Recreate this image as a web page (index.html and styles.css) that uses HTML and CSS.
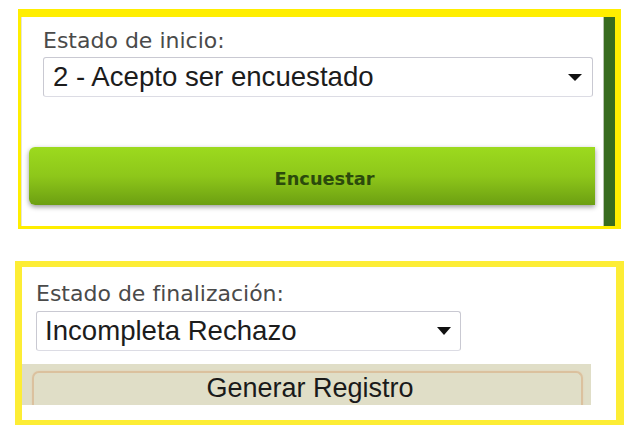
FILE: index.html
```html
<!DOCTYPE html>
<html lang="es">
<head>
<meta charset="utf-8">
<title>Estado</title>
<link rel="stylesheet" href="styles.css">
</head>
<body>
  <section class="panel panel-start">
    <div class="panel-body">
      <label class="field-label">Estado de inicio:</label>
      <div class="select select-start">
        <span class="select-text">2 - Acepto ser encuestado</span>
        <svg class="select-arrow" width="14" height="7" viewBox="0 0 14 7"><path d="M0 0H14L7 7Z" fill="#111"/></svg>
      </div>
      <button class="btn-green" type="button">Encuestar</button>
    </div>
    <div class="side-stripe"></div>
  </section>

  <section class="panel panel-end">
    <label class="field-label">Estado de finalización:</label>
    <div class="select select-end">
      <span class="select-text">Incompleta Rechazo</span>
      <svg class="select-arrow" width="14" height="8" viewBox="0 0 14 8"><path d="M0 0H14L7 8Z" fill="#111"/></svg>
    </div>
    <div class="beige-bar">
      <button class="btn-beige" type="button">Generar Registro</button>
    </div>
  </section>
</body>
</html>
```

FILE: styles.css
```css
html, body {
  margin: 0;
  padding: 0;
  background: #ffffff;
}

body {
  padding-top: 9px;
}

.panel {
  box-sizing: border-box;
  background: #ffffff;
}

.panel-start {
  margin-left: 18px;
  width: 603px;
  height: 220px;
  border-style: solid;
  border-color: #ffee00;
  border-width: 8px 6px 3px 4px;
  display: flex;
}

.panel-body {
  flex: 1;
  display: flex;
  flex-direction: column;
  padding: 11px 8px 0 7px;
  border-left: 1px solid #e4e4d8;
  margin-left: -1px;
}

.side-stripe {
  width: 11px;
  background: #386c1f;
  border-left: 1px solid #b8c4b0;
}

.field-label {
  display: block;
  font-family: "DejaVu Sans", Verdana, sans-serif;
  font-size: 22px;
  line-height: 26px;
  color: #4a4a4a;
}

.panel-start .field-label {
  margin-left: 14px;
}

.select {
  box-sizing: border-box;
  height: 40px;
  border: 1px solid #c9c9d2;
  border-bottom-color: #dcdce4;
  border-radius: 3px;
  background: #ffffff;
  display: flex;
  align-items: center;
  justify-content: space-between;
  font-family: "Liberation Sans", Arial, sans-serif;
  font-size: 27.6px;
  color: #1c1c1c;
}

.select-text {
  line-height: 38px;
  white-space: nowrap;
}

.select-start {
  margin: 3px 2px 0 14px;
  padding: 0 10px 0 9px;
}

.select-end {
  width: 425px;
  margin-top: 4px;
  padding: 0 9px 0 8px;
}

.btn-green {
  margin-top: 50px;
  height: 58px;
  border: none;
  border-radius: 6px 0 0 6px;
  background: linear-gradient(to bottom, #9cda1e 0%, #8ec71a 50%, #6c9f12 100%);
  box-shadow: 0 2px 5px rgba(0, 0, 0, 0.4);
  font-family: "DejaVu Sans", Verdana, sans-serif;
  font-weight: bold;
  font-size: 17.8px;
  color: #2b4a0c;
  padding: 4px 0 0 25px;
  cursor: pointer;
}

.panel-end {
  margin: 32px 0 0 15px;
  width: 609px;
  height: 164px;
  border-style: solid;
  border-color: #fded35;
  border-width: 6px 8px 5px 7px;
  padding: 14px 0 0 14px;
}

.beige-bar {
  margin: 13px 25px 0 -14px;
  height: 41px;
  background: #e0dec7;
  overflow: hidden;
  padding: 7px 8px 0 10px;
  box-sizing: border-box;
}

.btn-beige {
  display: block;
  width: 100%;
  box-sizing: border-box;
  border: 2px solid #dbc19e;
  border-bottom: none;
  border-radius: 7px 7px 0 0;
  background: #e0dec7;
  box-shadow: 0 0 2px #e2cfb2;
  font-family: "Liberation Sans", Arial, sans-serif;
  font-size: 27px;
  color: #1a1a1a;
  padding: 0 0 20px 5px;
  text-align: center;
  line-height: 31px;
}
```
